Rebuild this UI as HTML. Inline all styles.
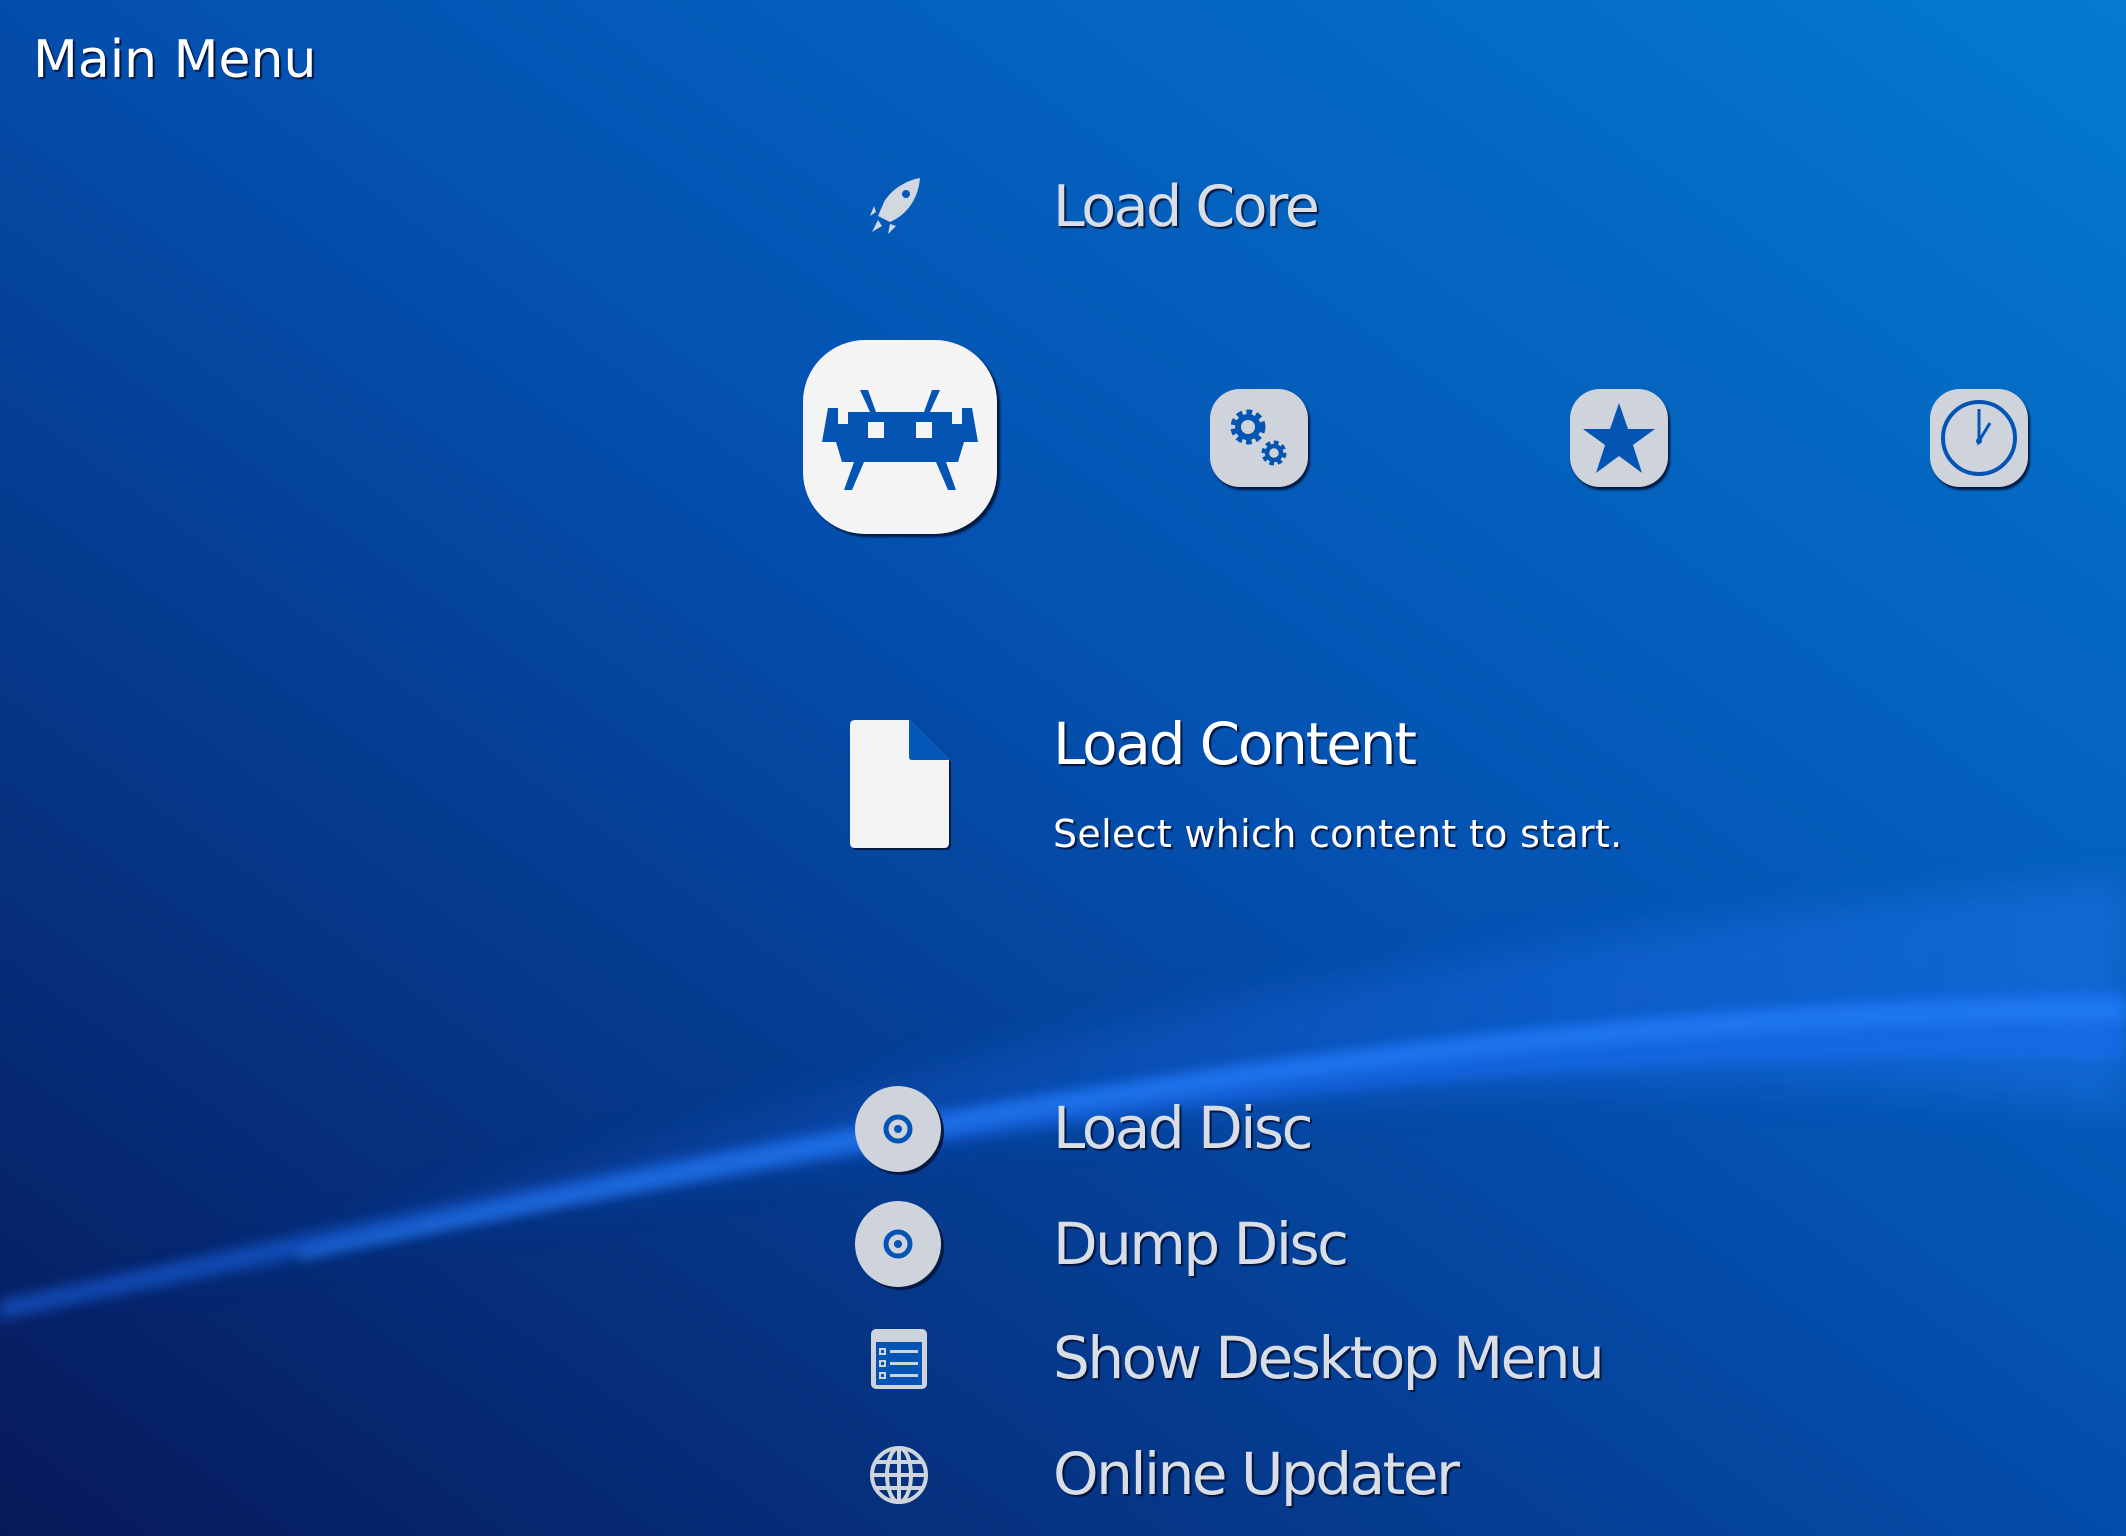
<!DOCTYPE html>
<html><head><meta charset="utf-8"><style>
html,body{margin:0;padding:0}
body{width:2126px;height:1536px;overflow:hidden;position:relative;font-family:"DejaVu Sans","Liberation Sans",sans-serif;background:#0450b0}
.t{position:absolute;white-space:nowrap;line-height:1;color:#d9dee6;text-shadow:2px 2px 1px rgba(0,10,40,.8)}
.i{position:absolute}
</style></head><body>
<svg class="i" style="left:0;top:0" width="2126" height="1536">
<defs>
<linearGradient id="bg" x1="1" y1="0" x2="0" y2="1">
<stop offset="0" stop-color="#047ad0"/><stop offset="0.45" stop-color="#0452b2"/><stop offset="1" stop-color="#07195a"/>
</linearGradient>
<linearGradient id="w1" x1="0" y1="0" x2="1" y2="0">
<stop offset="0" stop-color="#1a6cff" stop-opacity="0"/><stop offset="0.6" stop-color="#1f74ff" stop-opacity="0.5"/><stop offset="1" stop-color="#2a7dff" stop-opacity="0.7"/>
</linearGradient>
<filter id="b1"><feGaussianBlur stdDeviation="18"/></filter>
<filter id="b2"><feGaussianBlur stdDeviation="6"/></filter>
</defs>
<rect width="2126" height="1536" fill="url(#bg)"/>
<path d="M0 1320 C500 1180 1200 950 2126 880 L2126 1110 C1500 1030 800 1150 0 1330Z" fill="url(#w1)" opacity="0.5" filter="url(#b1)"/>
<path d="M0 1300 C600 1170 1300 1010 2126 990 L2126 1060 C1400 1040 700 1170 0 1320Z" fill="#1f72ff" opacity="0.45" filter="url(#b2)"/>
<path d="M300 1250 C900 1110 1500 1000 2126 1000 L2126 1020 C1500 1020 900 1130 300 1260Z" fill="#2a86ff" opacity="0.5" filter="url(#b2)"/>
</svg>

<div class="t" style="left:33px;top:34px;font-size:52px;color:#fff">Main Menu</div>

<!-- rocket -->
<svg class="i" style="left:868px;top:176px" width="60" height="60" viewBox="0 0 60 60">
<path d="M52 2 C40 4 24 12 16 26 L10 40 L22 46 C36 40 50 26 52 2Z" fill="#d2d8e0"/>
<circle cx="38" cy="18" r="4" fill="#0458b8"/>
<path d="M10 44 L4 56 L14 50Z M6 30 L2 40 L8 36Z M22 48 L20 58 L28 50Z" fill="#d2d8e0"/>
</svg>
<div class="t" style="left:1053px;top:179px;font-size:57px;letter-spacing:-2.5px">Load Core</div>

<!-- big retroarch icon -->
<div class="i" style="left:803px;top:340px;width:194px;height:194px;border-radius:62px;background:#f4f4f4;box-shadow:3px 3px 2px #021a44"></div>
<svg class="i" style="left:818px;top:390px" width="164" height="100" viewBox="0 0 164 100">
<g fill="#0454b4">
<path d="M42 0 L50 0 L58 22 L52 22Z M122 0 L114 0 L106 22 L112 22Z"/>
<path d="M10 18 L20 18 L20 34 L30 34 L30 22 L134 22 L134 34 L144 34 L144 18 L154 18 L160 52 L146 52 L140 72 L24 72 L18 52 L4 52Z"/>
<path d="M36 72 L46 72 L34 100 L26 100Z M118 72 L128 72 L138 100 L130 100Z"/>
</g>
<rect x="50" y="32" width="16" height="16" fill="#f4f4f4"/><rect x="98" y="32" width="16" height="16" fill="#f4f4f4"/>
</svg>

<!-- small tiles -->
<div class="i" style="left:1210px;top:389px;width:98px;height:98px;border-radius:30px;background:#cfd4dc;box-shadow:2px 3px 2px #021a44"></div>
<svg class="i" style="left:1210px;top:389px" width="98" height="98" viewBox="0 0 98 98">
<g fill="none" stroke="#0454b4">
<circle cx="38" cy="38" r="13" stroke-width="9" stroke-dasharray="5 3.5"/>
<circle cx="38" cy="38" r="10" stroke-width="6"/>
<circle cx="64" cy="64" r="9" stroke-width="7" stroke-dasharray="4 3"/>
<circle cx="64" cy="64" r="7" stroke-width="4.5"/>
</g>
</svg>
<div class="i" style="left:1570px;top:389px;width:98px;height:98px;border-radius:30px;background:#cfd4dc;box-shadow:2px 3px 2px #021a44"></div>
<svg class="i" style="left:1570px;top:389px" width="98" height="98" viewBox="0 0 98 98">
<path d="M49 14 L58 40 L85 40 L63 56 L72 84 L49 67 L26 84 L35 56 L13 40 L40 40Z" fill="#0454b4"/>
</svg>
<div class="i" style="left:1930px;top:389px;width:98px;height:98px;border-radius:30px;background:#cfd4dc;box-shadow:2px 3px 2px #021a44"></div>
<svg class="i" style="left:1930px;top:389px" width="98" height="98" viewBox="0 0 98 98">
<circle cx="49" cy="49" r="36" fill="none" stroke="#0454b4" stroke-width="4"/>
<path d="M49 20 L49 52 L60 34" fill="none" stroke="#0454b4" stroke-width="3"/>
<circle cx="49" cy="52" r="3" fill="#0454b4"/>
</svg>

<!-- file -->
<svg class="i" style="left:847px;top:717px" width="108" height="136" viewBox="0 0 108 136">
<path d="M8 3 L62 3 L102 43 L102 126 Q102 131 97 131 L8 131 Q3 131 3 126 L3 8 Q3 3 8 3Z" fill="#021a44" transform="translate(2,2)"/>
<path d="M8 3 L62 3 L102 43 L102 126 Q102 131 97 131 L8 131 Q3 131 3 126 L3 8 Q3 3 8 3Z" fill="#f3f3f3"/>
<path d="M62 3 L62 40 Q62 43 65 43 L102 43Z" fill="#0458b8"/>
</svg>
<div class="t" style="left:1053px;top:715px;font-size:58px;letter-spacing:-2.2px;color:#fff">Load Content</div>
<div class="t" style="left:1053px;top:815px;font-size:38px;letter-spacing:0.3px;color:#fff">Select which content to start.</div>

<!-- disc icons -->
<svg class="i" style="left:852px;top:1083px" width="96" height="96" viewBox="0 0 96 96">
<circle cx="49" cy="49" r="43" fill="#021a44"/><circle cx="46" cy="46" r="43" fill="#cfd4dc"/>
<circle cx="46" cy="46" r="12" fill="none" stroke="#0454b4" stroke-width="5"/><circle cx="46" cy="46" r="4" fill="#0454b4"/>
</svg>
<div class="t" style="left:1053px;top:1099px;font-size:58px;letter-spacing:-2.5px">Load Disc</div>
<svg class="i" style="left:852px;top:1198px" width="96" height="96" viewBox="0 0 96 96">
<circle cx="49" cy="49" r="43" fill="#021a44"/><circle cx="46" cy="46" r="43" fill="#cfd4dc"/>
<circle cx="46" cy="46" r="12" fill="none" stroke="#0454b4" stroke-width="5"/><circle cx="46" cy="46" r="4" fill="#0454b4"/>
</svg>
<div class="t" style="left:1053px;top:1215px;font-size:58px;letter-spacing:-2.5px">Dump Disc</div>

<!-- desktop menu icon -->
<svg class="i" style="left:868px;top:1326px" width="64" height="66" viewBox="0 0 64 66">
<rect x="3" y="3" width="56" height="60" rx="5" fill="#cfd4dc"/>
<g fill="#0454b4">
<rect x="8" y="16" width="46" height="43"/>
</g>
<g fill="#cfd4dc">
<rect x="11" y="22" width="7" height="7"/><rect x="11" y="34" width="7" height="7"/><rect x="11" y="46" width="7" height="7"/>
<rect x="22" y="24" width="28" height="3"/><rect x="22" y="36" width="28" height="3"/><rect x="22" y="48" width="28" height="3"/>
</g>
<g fill="#0454b4"><rect x="13" y="24" width="3" height="3"/><rect x="13" y="36" width="3" height="3"/><rect x="13" y="48" width="3" height="3"/></g>
</svg>
<div class="t" style="left:1053px;top:1329px;font-size:58px;letter-spacing:-2.5px">Show Desktop Menu</div>

<!-- globe -->
<svg class="i" style="left:868px;top:1444px" width="64" height="64" viewBox="0 0 64 64">
<g fill="none" stroke="#cfd4dc" stroke-width="4">
<circle cx="31" cy="31" r="27"/>
<ellipse cx="31" cy="31" rx="12" ry="27"/>
<line x1="31" y1="4" x2="31" y2="58"/>
<line x1="4" y1="31" x2="58" y2="31"/>
<path d="M8 18 H54 M8 44 H54"/>
</g>
</svg>
<div class="t" style="left:1053px;top:1445px;font-size:58px;letter-spacing:-2.5px">Online Updater</div>
</body></html>
